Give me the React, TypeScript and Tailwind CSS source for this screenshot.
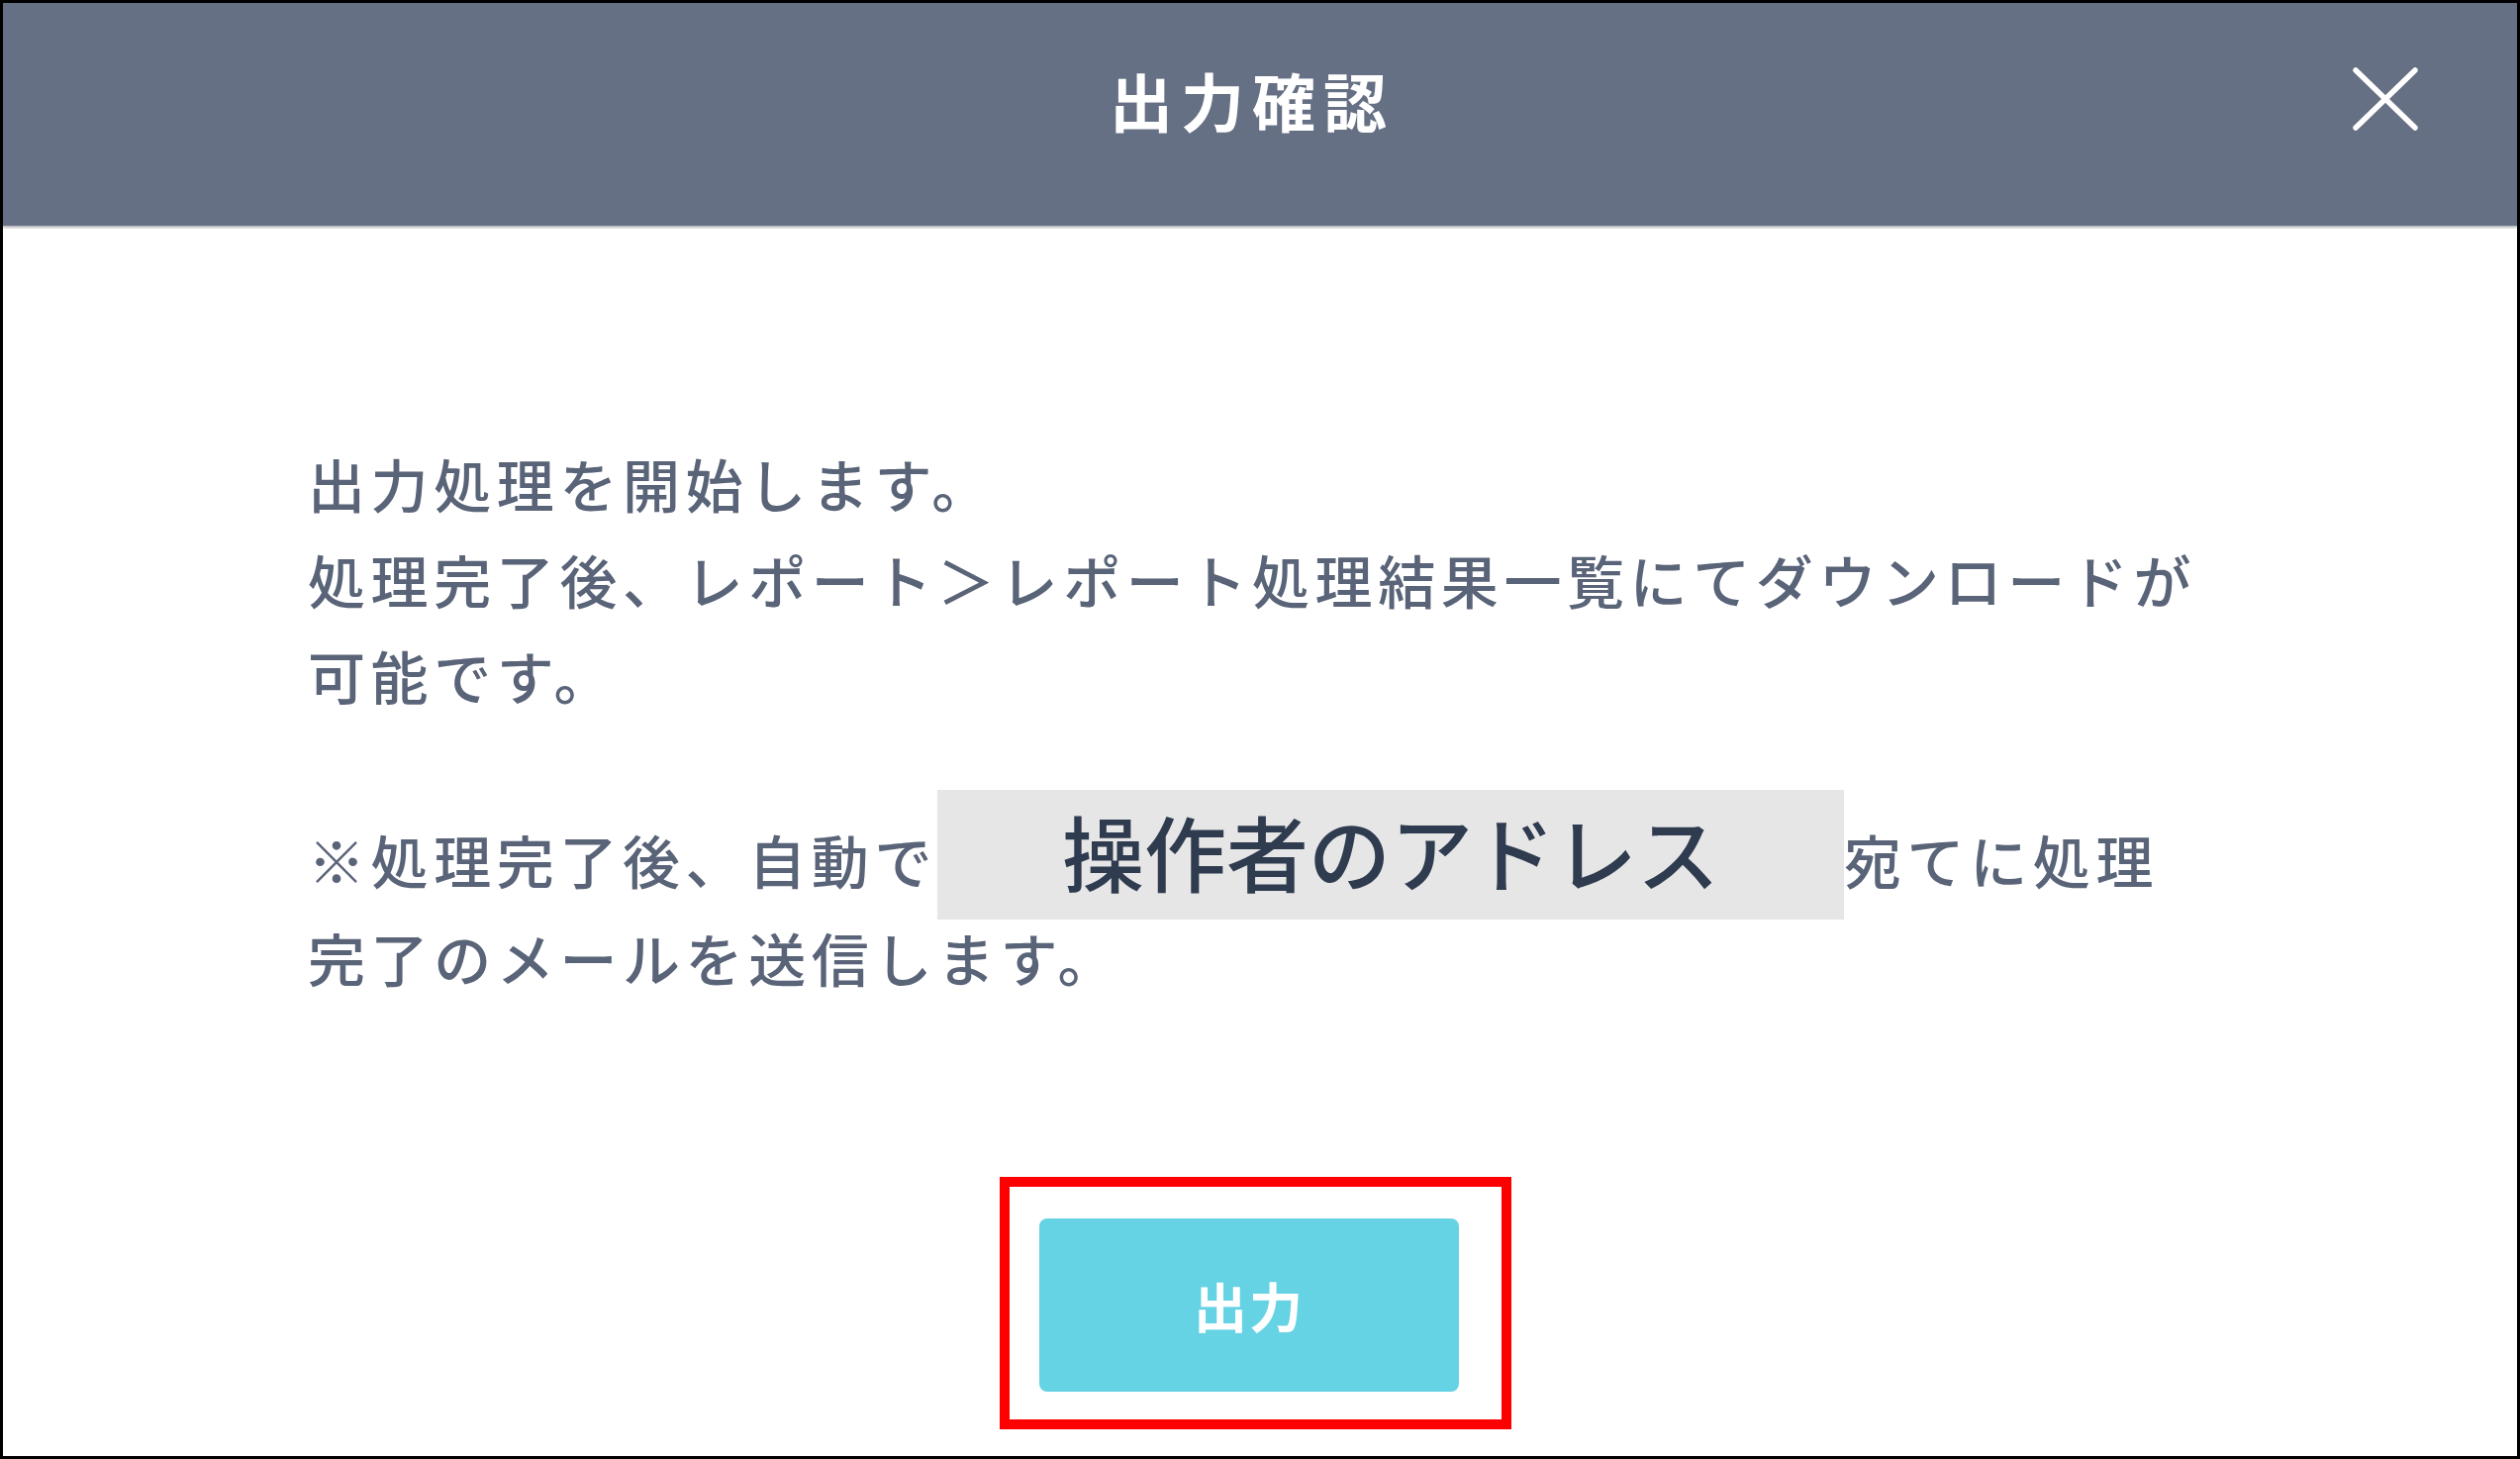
const jp = '"Noto Sans CJK JP", "Noto Sans", sans-serif';

function CloseIcon() {
  return (
    <svg width="66" height="64" viewBox="0 0 66 64" fill="none">
      <path d="M3 3L63 61M63 3L3 61" stroke="white" strokeWidth="5.5" strokeLinecap="round" />
    </svg>
  );
}

export default function App() {
  return (
    <div
      className="w-[2546px] h-[1474px] border-[3px] border-black bg-white flex flex-col overflow-hidden"
      style={{ fontFamily: jp }}
    >
      {/* ヘッダー */}
      <header className="relative h-[225px] shrink-0 bg-[#667084] shadow-[0_2px_2px_rgba(40,48,60,0.35)] flex items-center justify-center pb-[32px] pr-[16px]">
        <h1 className="text-[64px] font-bold tracking-[8px] text-white leading-none">出力確認</h1>
        <button className="absolute right-[100px] top-[65px] p-0">
          <CloseIcon />
        </button>
      </header>

      <main className="flex flex-col flex-1">
        <div className="pl-[308px] pt-[212px] text-[#5a6478] text-[58px] font-medium tracking-[5.6px] leading-[97px]">
          <p>
            出力処理を開始します。
            <br />
            処理完了後、レポート＞レポート処理結果一覧にてダウンロードが
            <br />
            可能です。
          </p>

          <div className="mt-[67px] flex items-center">
            <span className="pt-[10px]">※処理完了後、自動で</span>
            <span className="w-[916px] h-[131px] bg-[#e6e6e6] flex items-center justify-center pb-[8px] text-[83px] tracking-normal text-[#2f3b4e] leading-none">
              操作者のアドレス
            </span>
            <span className="pt-[10px]">宛てに処理</span>
          </div>
          <p className="-mt-[10px]">完了のメールを送信します。</p>
        </div>

        <div className="mt-[173px] flex justify-center pr-[9px]">
          <div className="border-[10px] border-[#ff0000] pl-[30px] pr-[43px] pt-[32px] pb-[28px]">
            <button className="w-[424px] h-[175px] rounded-[8px] bg-[#66d3e4] text-white text-[54px] font-bold tracking-[2px] flex items-center justify-center">
              出力
            </button>
          </div>
        </div>
      </main>
    </div>
  );
}
